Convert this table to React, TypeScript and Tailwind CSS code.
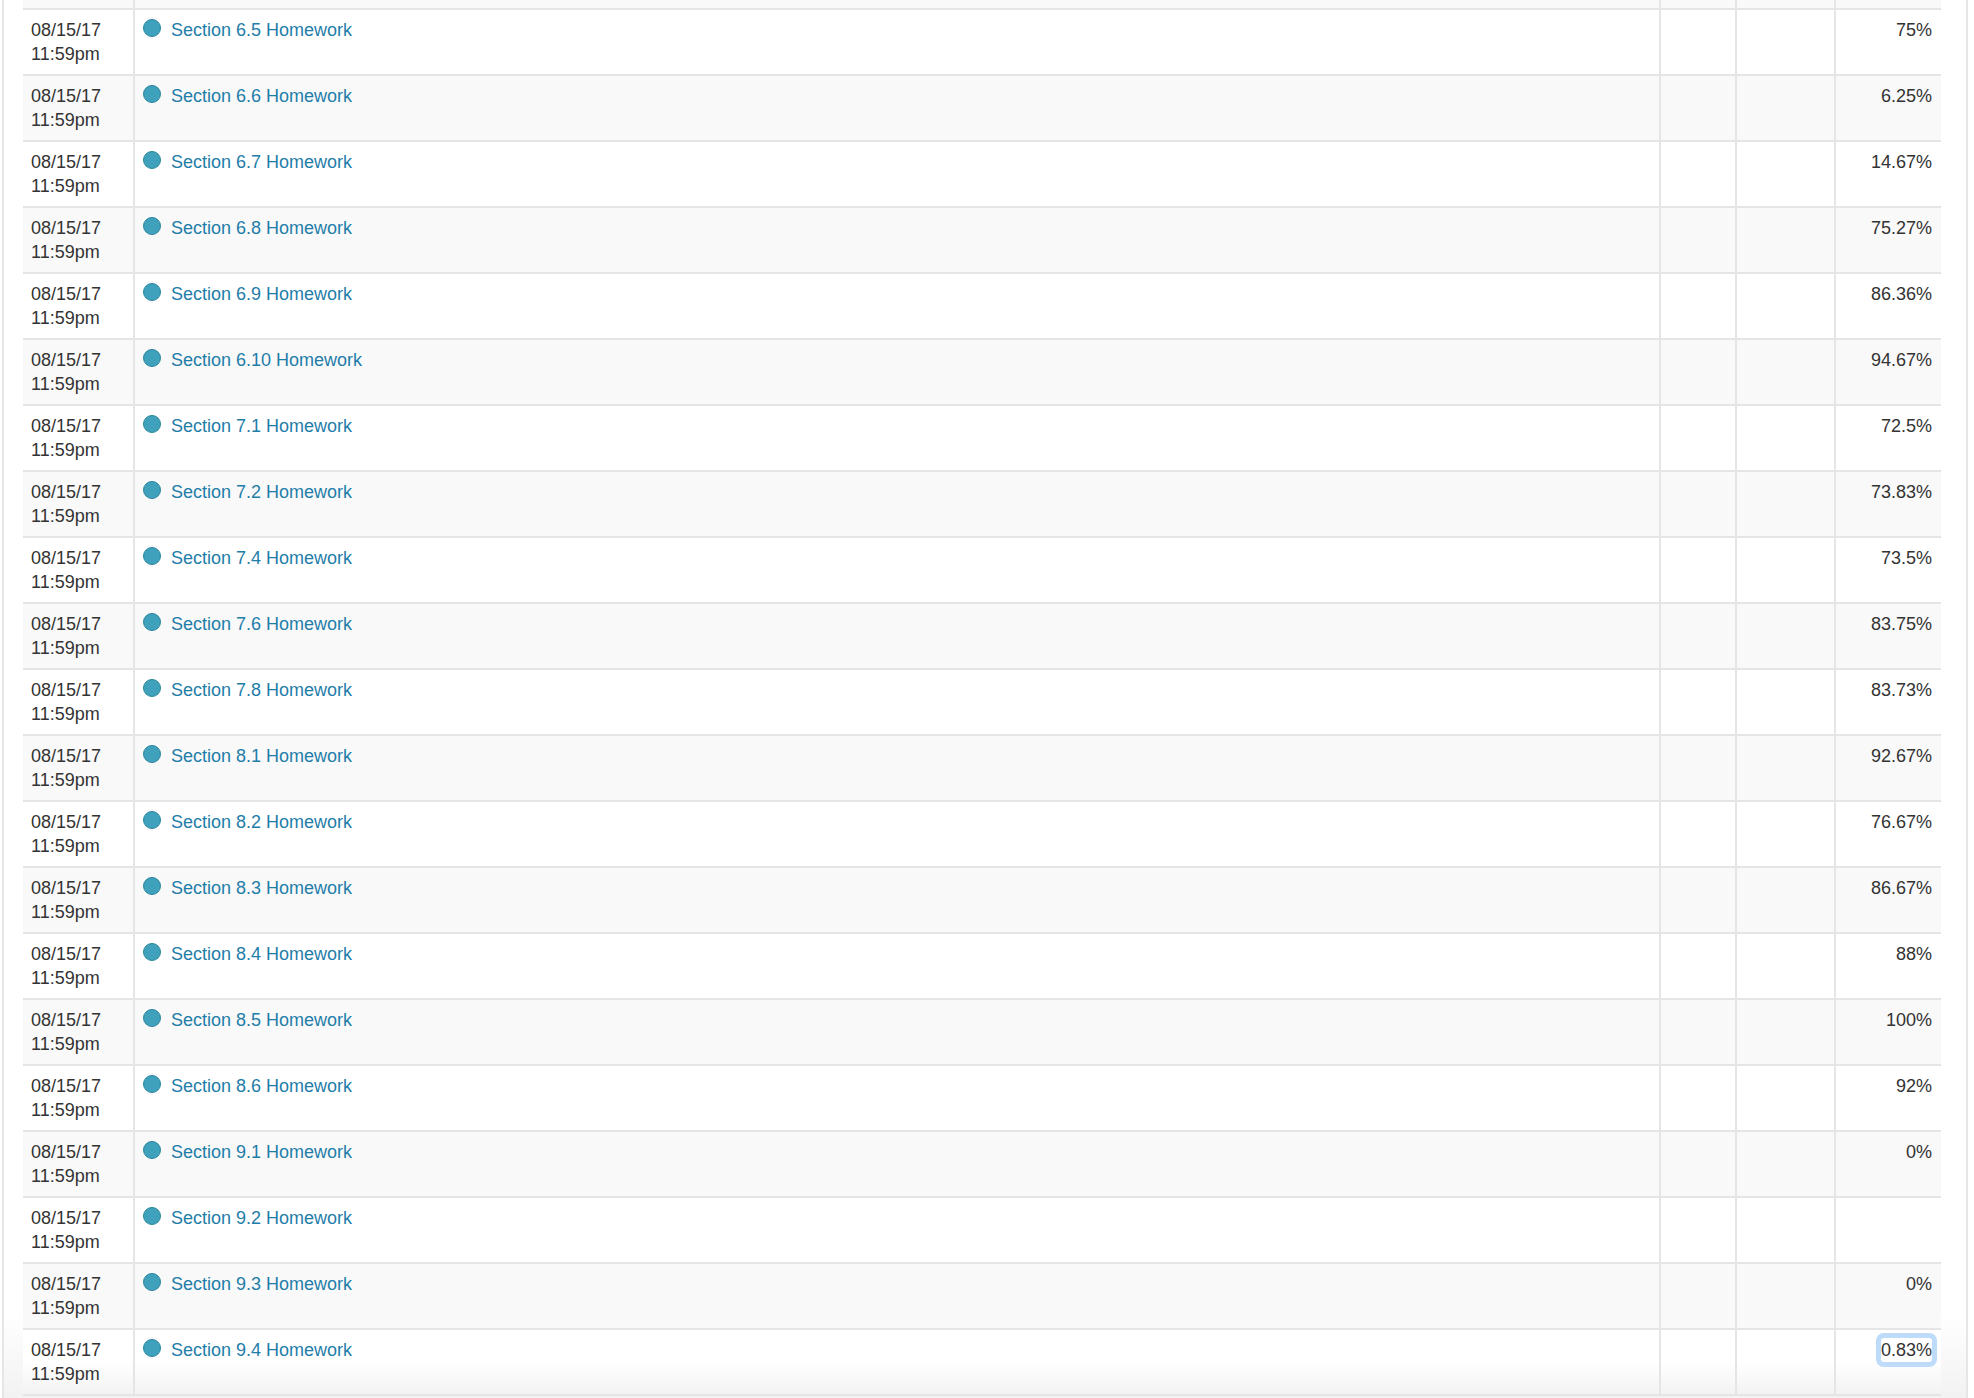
import React from "react";

const rows = [
  { name: "Section 6.5 Homework", score: "75%" },
  { name: "Section 6.6 Homework", score: "6.25%" },
  { name: "Section 6.7 Homework", score: "14.67%" },
  { name: "Section 6.8 Homework", score: "75.27%" },
  { name: "Section 6.9 Homework", score: "86.36%" },
  { name: "Section 6.10 Homework", score: "94.67%" },
  { name: "Section 7.1 Homework", score: "72.5%" },
  { name: "Section 7.2 Homework", score: "73.83%" },
  { name: "Section 7.4 Homework", score: "73.5%" },
  { name: "Section 7.6 Homework", score: "83.75%" },
  { name: "Section 7.8 Homework", score: "83.73%" },
  { name: "Section 8.1 Homework", score: "92.67%" },
  { name: "Section 8.2 Homework", score: "76.67%" },
  { name: "Section 8.3 Homework", score: "86.67%" },
  { name: "Section 8.4 Homework", score: "88%" },
  { name: "Section 8.5 Homework", score: "100%" },
  { name: "Section 8.6 Homework", score: "92%" },
  { name: "Section 9.1 Homework", score: "0%" },
  { name: "Section 9.2 Homework", score: "" },
  { name: "Section 9.3 Homework", score: "0%" },
  { name: "Section 9.4 Homework", score: "0.83%", focused: true },
];

const cols = "grid grid-cols-[110px_1526px_76px_99px_107px]";

const GradeRow = ({ row, index }: { row: (typeof rows)[number]; index: number }) => (
  <div
    className={`${cols} h-[66px] border-t-2 border-[#e5e5e5] ${
      index === rows.length - 1
        ? "bg-gradient-to-b from-white from-50% to-[#f3f3f3]"
        : index % 2 === 1
        ? "bg-[#f9f9f9]"
        : "bg-white"
    }`}
  >
    <div className="pl-2 pt-2 text-[#333]">
      <div>08/15/17</div>
      <div>11:59pm</div>
    </div>
    <div className="border-l-2 border-[#e5e5e5] pl-2 pt-2 flex items-start">
      <span className="mt-[1px] w-[18px] h-[18px] rounded-full bg-[#3fa1bc] border border-[#2c87a1] shrink-0" />
      <a href="#" className="ml-[10px] text-[#1f7da9]">
        {row.name}
      </a>
    </div>
    <div className="border-l-2 border-[#e5e5e5]" />
    <div className="border-l-2 border-[#e5e5e5]" />
    <div className="border-l-2 border-[#e5e5e5] pt-2 pr-[9px] text-right text-[#333]">
      {row.focused ? (
        <span className="inline-block bg-white rounded-[3px] ring-[5px] ring-[#bedcfa]">{row.score}</span>
      ) : (
        row.score
      )}
    </div>
  </div>
);

export default function App() {
  return (
    <div className="w-[1974px] h-[1398px] overflow-hidden bg-white font-['Liberation_Sans',Arial,sans-serif] text-[18px] leading-[24px]">
      <div className="ml-[2px] w-[1966px] h-full border-l-2 border-r-2 border-[#e6e6e6] pl-[19px] bg-gradient-to-b from-white from-[94%] to-[#f2f2f2]">
        <div className="w-[1918px]">
          <div className={`${cols} h-[8px] bg-[#f9f9f9]`}>
            <div />
            <div className="border-l-2 border-[#e5e5e5]" />
            <div className="border-l-2 border-[#e5e5e5]" />
            <div className="border-l-2 border-[#e5e5e5]" />
            <div className="border-l-2 border-[#e5e5e5]" />
          </div>
          {rows.map((row, i) => (
            <GradeRow key={row.name} row={row} index={i} />
          ))}
          <div className="border-t-2 border-[#e5e5e5]" />
        </div>
      </div>
    </div>
  );
}
